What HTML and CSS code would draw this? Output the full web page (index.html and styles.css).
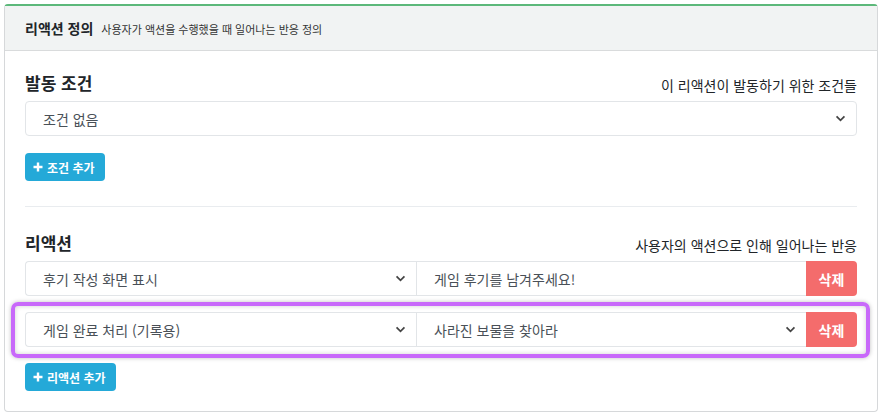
FILE: index.html
```html
<!DOCTYPE html>
<html lang="ko">
<head>
<meta charset="utf-8">
<link rel="stylesheet" href="styles.css">
</head>
<body>
<div class="card">
  <div class="card-header">
    <span class="title">리액션 정의</span>
    <span class="subtitle">사용자가 액션을 수행했을 때 일어나는 반응 정의</span>
  </div>
  <div class="card-body">
    <div class="section-head">
      <h3>발동 조건</h3>
      <span class="hint">이 리액션이 발동하기 위한 조건들</span>
    </div>
    <div class="select full">
      <span>조건 없음</span>
      <svg class="chev" viewBox="0 0 12 8" width="11" height="7"><path d="M1.5 1.5 L6 6 L10.5 1.5" fill="none" stroke="#444" stroke-width="2"/></svg>
    </div>
    <button class="btn-info"><svg viewBox="0 0 10 10" width="10" height="10"><path d="M5 0.5 V9.5 M0.5 5 H9.5" stroke="#fff" stroke-width="2.4"/></svg>조건 추가</button>
    <hr>
    <div class="section-head">
      <h3>리액션</h3>
      <span class="hint">사용자의 액션으로 인해 일어나는 반응</span>
    </div>
    <div class="row">
      <div class="select first">
        <span>후기 작성 화면 표시</span>
        <svg class="chev" viewBox="0 0 12 8" width="11" height="7"><path d="M1.5 1.5 L6 6 L10.5 1.5" fill="none" stroke="#444" stroke-width="2"/></svg>
      </div>
      <div class="input"><span>게임 후기를 남겨주세요!</span></div>
      <button class="btn-danger">삭제</button>
    </div>
    <div class="row highlighted">
      <div class="select first">
        <span>게임 완료 처리 (기록용)</span>
        <svg class="chev" viewBox="0 0 12 8" width="11" height="7"><path d="M1.5 1.5 L6 6 L10.5 1.5" fill="none" stroke="#444" stroke-width="2"/></svg>
      </div>
      <div class="select second">
        <span>사라진 보물을 찾아라</span>
        <svg class="chev" viewBox="0 0 12 8" width="11" height="7"><path d="M1.5 1.5 L6 6 L10.5 1.5" fill="none" stroke="#444" stroke-width="2"/></svg>
      </div>
      <button class="btn-danger">삭제</button>
    </div>
    <button class="btn-info"><svg viewBox="0 0 10 10" width="10" height="10"><path d="M5 0.5 V9.5 M0.5 5 H9.5" stroke="#fff" stroke-width="2.4"/></svg>리액션 추가</button>
  </div>
</div>
</body>
</html>
```
FILE: styles.css
```css
* { box-sizing: border-box; }
html, body { background: #fff; }
body {
  margin: 4px 6px 0 4px;
  font-family: "Noto Sans CJK KR", "Noto Sans", sans-serif;
  color: #212529;
}
.card {
  border: 1px solid #d6d8da;
  border-top: 2px solid #5cb87a;
  border-radius: 4px;
  background: #fff;
  height: 408px;
}
.card-header {
  height: 45px;
  background: #f1f3f3;
  border-bottom: 1px solid #d9dbdc;
  display: flex;
  align-items: center;
  padding: 0 20px;
  gap: 8px;
}
.title { font-size: 14px; font-weight: 700; color: #212529; }
.subtitle { font-size: 11px; color: #333; padding-top: 1px; }
.card-body { padding: 20px 20px 0 20px; }
.section-head {
  display: flex;
  justify-content: space-between;
  align-items: flex-end;
  height: 24px;
  margin-bottom: 6px;
}
.section-head h3 {
  margin: 0;
  font-size: 17px;
  font-weight: 600;
  line-height: 24px;
  color: #212529;
}
.hint { font-size: 14px; color: #212529; line-height: 20px; }
.select, .input {
  height: 35px;
  border: 1px solid #e2e5e8;
  background: #fff;
  display: flex;
  align-items: center;
  padding: 0 10px 0 17px;
  font-size: 14px;
  color: #495057;
}
.select span, .input span { flex: 1; }
.select.full { border-radius: 4px; margin-bottom: 17px; }
.chev { flex: none; }
.btn-info {
  display: inline-flex;
  align-items: center;
  gap: 4px;
  height: 28px;
  padding: 0 10px 0 8px;
  border: none;
  border-radius: 4px;
  background: #24a9d8;
  color: #fff;
  font-family: inherit;
  font-size: 12px;
  font-weight: 700;
}
hr {
  border: none;
  border-top: 1px solid #e9ecef;
  margin: 25px 0 24px;
}
.row {
  display: flex;
  height: 35px;
  margin-bottom: 16px;
  position: relative;
}
.row .first { flex: 0 0 391px; border-radius: 4px 0 0 4px; border-right: none; }
.row .input, .row .second { flex: 1; border-right: none; }
.row .second { padding-right: 10px; }
.btn-danger {
  flex: 0 0 51px;
  border: none;
  border-radius: 0 4px 4px 0;
  background: #f46c6c;
  color: #fff;
  font-family: inherit;
  font-size: 14px;
  font-weight: 700;
  padding: 0;
}
.highlighted::before {
  content: "";
  position: absolute;
  top: -10px;
  bottom: -11px;
  left: -14px;
  right: -13px;
  border: 4px solid #c869fa;
  border-radius: 7px;
  box-shadow: 0 0 4px rgba(0,0,0,0.25), inset 0 0 5px rgba(0,0,0,0.18);
  pointer-events: none;
}
```
